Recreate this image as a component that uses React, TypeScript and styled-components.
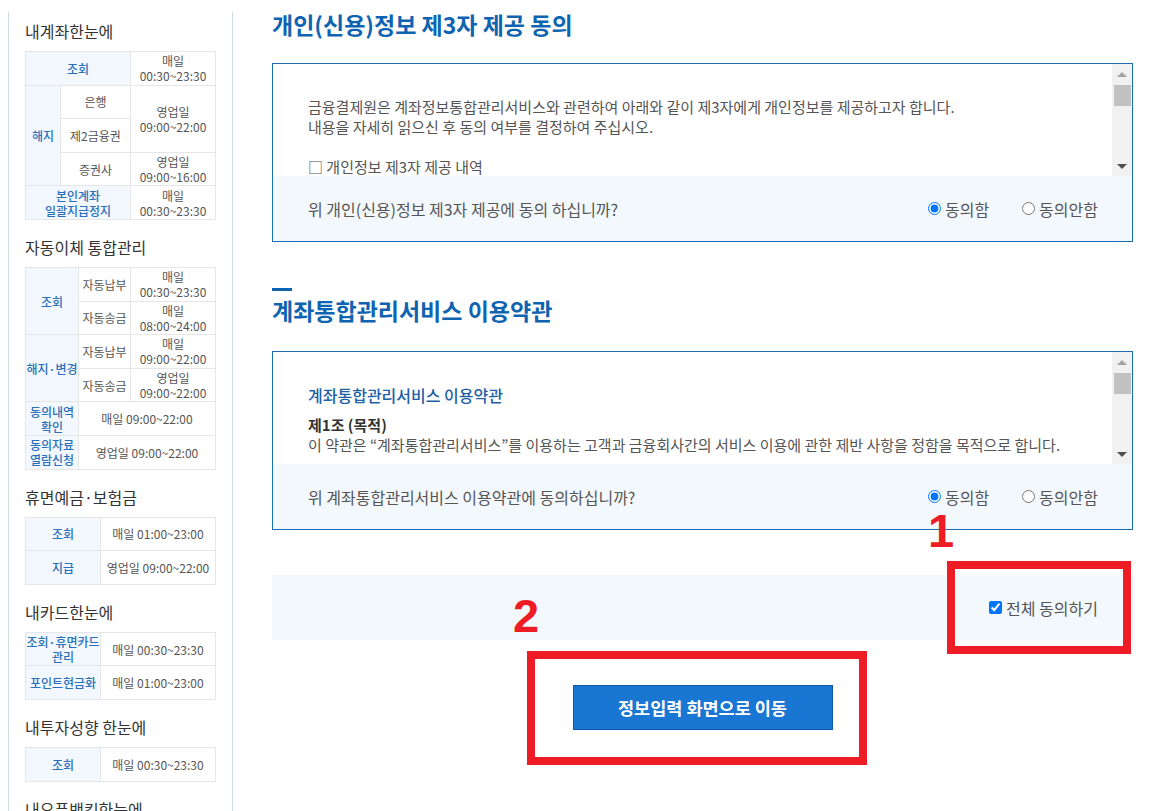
import React from "react";
import styled, { createGlobalStyle } from "styled-components";

const GlobalStyle = createGlobalStyle`
    html, body {
        margin: 0;
        padding: 0;
        background: #fff;
    }

    body {
        font-family: "Noto Sans CJK KR", "Noto Sans", sans-serif;
        color: #555;
    }
`;

const Page = styled.div`
    display: flex;
    align-items: flex-start;
    width: 1151px;
`;

/* ---------- sidebar ---------- */

const Sidebar = styled.aside`
    flex: none;
    box-sizing: border-box;
    width: 225px;
    min-height: 900px;
    margin: 12px 0 0 8px;
    padding: 9px 17px 0 16px;
    border-left: 1px solid #cfdeed;
    border-right: 1px solid #cfdeed;
`;

const SideGroup = styled.section`
    & + & {
        margin-top: 17px;
    }
`;

const SideTitle = styled.h3`
    margin: 0 0 10px;
    font-size: 16px;
    font-weight: 400;
    line-height: 20px;
    color: #333;
`;

const TimeTable = styled.table`
    width: 190px;
    border-collapse: collapse;
    table-layout: fixed;
    font-size: 12px;
    line-height: 15px;
    color: #555;

    & td,
    & th {
        height: 32.6px;
        padding: 0;
        border: 1px solid #e6e6e6;
        text-align: center;
        vertical-align: middle;
    }

    & th {
        background: #f2f8fe;
        color: #2a6fba;
        font-weight: 500;
    }
`;

const Col = styled.col<{ $w: number }>`
    width: ${(p) => p.$w}px;
`;

/* ---------- main ---------- */

const Main = styled.main`
    position: relative;
    flex: none;
    width: 861px;
    margin-left: 39px;
    padding-top: 9px;
`;

const Section = styled.section`
    & + & {
        margin-top: 46px;
    }
`;

const SectionTitle = styled.h2<{ $bar?: boolean }>`
    margin: 0 0 ${(p) => (p.$bar ? 26 : 24)}px;
    font-size: 23px;
    font-weight: 700;
    line-height: 30px;
    color: #0f64b1;

    &::before {
        content: "";
        display: ${(p) => (p.$bar ? "block" : "none")};
        width: 20px;
        height: 3px;
        margin-bottom: 4px;
        background: #0f64b1;
    }
`;

const ConsentBox = styled.div`
    border: 1px solid #1a6cb4;
`;

const ScrollArea = styled.div`
    display: flex;
    height: 112px;
    background: #fff;
`;

const ScrollText = styled.div`
    flex: 1;
    overflow: hidden;
    padding: 33px 35px 0;
    font-size: 15px;
    line-height: 20px;
    color: #555;

    & p {
        margin: 0 0 20px;
    }
`;

const TermsTitle = styled.p`
    && {
        margin: 0 0 10px;
    }
    font-size: 16px;
    font-weight: 500;
    color: #1e5fa6;
`;

const Article = styled.strong`
    display: block;
    font-weight: 700;
    color: #333;
`;

const Scrollbar = styled.div`
    flex: none;
    display: flex;
    flex-direction: column;
    align-items: center;
    width: 20px;
    background: #f1f1f1;
`;

const ArrowButton = styled.div<{ $dir: "up" | "down" }>`
    display: flex;
    align-items: center;
    justify-content: center;
    width: 100%;
    height: 20px;

    &::after {
        content: "";
        border-left: 5px solid transparent;
        border-right: 5px solid transparent;
        ${(p) =>
            p.$dir === "up"
                ? "border-bottom: 5px solid #a3a3a3;"
                : "border-top: 5px solid #505050;"}
    }
`;

const Thumb = styled.div`
    width: 17px;
    height: 21px;
    margin-top: 1px;
    background: #c1c1c1;
`;

const Track = styled.div`
    flex: 1;
`;

const BoxFooter = styled.div`
    display: flex;
    align-items: center;
    justify-content: space-between;
    height: 65px;
    padding: 0 34px 0 35px;
    background: #f3f8fd;
    font-size: 16px;
    color: #555;
`;

const RadioGroup = styled.div`
    display: flex;
    gap: 33px;
`;

const CheckLabel = styled.label`
    display: inline-flex;
    align-items: center;
    gap: 4px;
    font-size: 16px;
    color: #555;

    & input {
        width: 13px;
        height: 13px;
        margin: 0;
    }
`;

const AllAgreeBar = styled.div`
    display: flex;
    align-items: center;
    justify-content: flex-end;
    height: 65px;
    margin-top: 45px;
    padding: 0 35px;
    background: #f3f8fd;
`;

const ButtonRow = styled.div`
    display: flex;
    justify-content: center;
    margin-top: 45px;
`;

const NextButton = styled.button`
    width: 260px;
    height: 45px;
    border: 1px solid #0f5ba6;
    background: #1976d2;
    color: #fff;
    font-family: "Noto Sans CJK KR", "Noto Sans", sans-serif;
    font-size: 17.5px;
    font-weight: 700;
    cursor: pointer;
`;

/* ---------- annotations laid over the page ---------- */

const MarkBox = styled.div<{ $x: number; $y: number; $w: number; $h: number }>`
    position: absolute;
    left: ${(p) => p.$x}px;
    top: ${(p) => p.$y}px;
    width: ${(p) => p.$w}px;
    height: ${(p) => p.$h}px;
    box-sizing: border-box;
    border: 8px solid #ee1c25;
    pointer-events: none;
`;

const MarkNum = styled.span<{ $x: number; $y: number }>`
    position: absolute;
    left: ${(p) => p.$x}px;
    top: ${(p) => p.$y}px;
    font-family: "Liberation Sans", Arial, sans-serif;
    font-size: 47px;
    font-weight: 700;
    line-height: 1;
    color: #ee1c25;
    pointer-events: none;
`;

const FakeScroll = () => (
    <Scrollbar>
        <ArrowButton $dir="up" />
        <Thumb />
        <Track />
        <ArrowButton $dir="down" />
    </Scrollbar>
);

const App = () => {
    return (
        <Page>
            <GlobalStyle />
            <Sidebar>
                <SideGroup>
                    <SideTitle>내계좌한눈에</SideTitle>
                    <TimeTable>
                        <colgroup>
                            <Col $w={35} />
                            <Col $w={70} />
                            <Col $w={85} />
                        </colgroup>
                        <tbody>
                            <tr>
                                <th colSpan={2}>조회</th>
                                <td>매일<br />00:30~23:30</td>
                            </tr>
                            <tr>
                                <th rowSpan={3}>해지</th>
                                <td>은행</td>
                                <td rowSpan={2}>영업일<br />09:00~22:00</td>
                            </tr>
                            <tr>
                                <td>제2금융권</td>
                            </tr>
                            <tr>
                                <td>증권사</td>
                                <td>영업일<br />09:00~16:00</td>
                            </tr>
                            <tr>
                                <th colSpan={2}>본인계좌<br />일괄지급정지</th>
                                <td>매일<br />00:30~23:30</td>
                            </tr>
                        </tbody>
                    </TimeTable>
                </SideGroup>

                <SideGroup>
                    <SideTitle>자동이체 통합관리</SideTitle>
                    <TimeTable>
                        <colgroup>
                            <Col $w={53} />
                            <Col $w={52} />
                            <Col $w={85} />
                        </colgroup>
                        <tbody>
                            <tr>
                                <th rowSpan={2}>조회</th>
                                <td>자동납부</td>
                                <td>매일<br />00:30~23:30</td>
                            </tr>
                            <tr>
                                <td>자동송금</td>
                                <td>매일<br />08:00~24:00</td>
                            </tr>
                            <tr>
                                <th rowSpan={2}>해지·변경</th>
                                <td>자동납부</td>
                                <td>매일<br />09:00~22:00</td>
                            </tr>
                            <tr>
                                <td>자동송금</td>
                                <td>영업일<br />09:00~22:00</td>
                            </tr>
                            <tr>
                                <th>동의내역<br />확인</th>
                                <td colSpan={2}>매일 09:00~22:00</td>
                            </tr>
                            <tr>
                                <th>동의자료<br />열람신청</th>
                                <td colSpan={2}>영업일 09:00~22:00</td>
                            </tr>
                        </tbody>
                    </TimeTable>
                </SideGroup>

                <SideGroup>
                    <SideTitle>휴면예금·보험금</SideTitle>
                    <TimeTable>
                        <colgroup>
                            <Col $w={75} />
                            <Col $w={115} />
                        </colgroup>
                        <tbody>
                            <tr>
                                <th>조회</th>
                                <td>매일 01:00~23:00</td>
                            </tr>
                            <tr>
                                <th>지급</th>
                                <td>영업일 09:00~22:00</td>
                            </tr>
                        </tbody>
                    </TimeTable>
                </SideGroup>

                <SideGroup>
                    <SideTitle>내카드한눈에</SideTitle>
                    <TimeTable>
                        <colgroup>
                            <Col $w={75} />
                            <Col $w={115} />
                        </colgroup>
                        <tbody>
                            <tr>
                                <th>조회·휴면카드<br />관리</th>
                                <td>매일 00:30~23:30</td>
                            </tr>
                            <tr>
                                <th>포인트현금화</th>
                                <td>매일 01:00~23:00</td>
                            </tr>
                        </tbody>
                    </TimeTable>
                </SideGroup>

                <SideGroup>
                    <SideTitle>내투자성향 한눈에</SideTitle>
                    <TimeTable>
                        <colgroup>
                            <Col $w={75} />
                            <Col $w={115} />
                        </colgroup>
                        <tbody>
                            <tr>
                                <th>조회</th>
                                <td>매일 00:30~23:30</td>
                            </tr>
                        </tbody>
                    </TimeTable>
                </SideGroup>

                <SideGroup>
                    <SideTitle>내오픈뱅킹한눈에</SideTitle>
                </SideGroup>
            </Sidebar>

            <Main>
                <Section>
                    <SectionTitle>개인(신용)정보 제3자 제공 동의</SectionTitle>
                    <ConsentBox>
                        <ScrollArea>
                            <ScrollText>
                                <p>
                                    금융결제원은 계좌정보통합관리서비스와 관련하여 아래와 같이 제3자에게 개인정보를 제공하고자 합니다.
                                    <br />
                                    내용을 자세히 읽으신 후 동의 여부를 결정하여 주십시오.
                                </p>
                                <p>□ 개인정보 제3자 제공 내역</p>
                            </ScrollText>
                            <FakeScroll />
                        </ScrollArea>
                        <BoxFooter>
                            <span>위 개인(신용)정보 제3자 제공에 동의 하십니까?</span>
                            <RadioGroup>
                                <CheckLabel>
                                    <input type="radio" name="agree1" defaultChecked />
                                    동의함
                                </CheckLabel>
                                <CheckLabel>
                                    <input type="radio" name="agree1" />
                                    동의안함
                                </CheckLabel>
                            </RadioGroup>
                        </BoxFooter>
                    </ConsentBox>
                </Section>

                <Section>
                    <SectionTitle $bar>계좌통합관리서비스 이용약관</SectionTitle>
                    <ConsentBox>
                        <ScrollArea>
                            <ScrollText>
                                <TermsTitle>계좌통합관리서비스 이용약관</TermsTitle>
                                <p>
                                    <Article>제1조 (목적)</Article>
                                    이 약관은 “계좌통합관리서비스”를 이용하는 고객과 금융회사간의 서비스 이용에 관한 제반 사항을 정함을 목적으로 합니다.
                                </p>
                            </ScrollText>
                            <FakeScroll />
                        </ScrollArea>
                        <BoxFooter>
                            <span>위 계좌통합관리서비스 이용약관에 동의하십니까?</span>
                            <RadioGroup>
                                <CheckLabel>
                                    <input type="radio" name="agree2" defaultChecked />
                                    동의함
                                </CheckLabel>
                                <CheckLabel>
                                    <input type="radio" name="agree2" />
                                    동의안함
                                </CheckLabel>
                            </RadioGroup>
                        </BoxFooter>
                    </ConsentBox>
                </Section>

                <AllAgreeBar>
                    <CheckLabel>
                        <input type="checkbox" defaultChecked />
                        전체 동의하기
                    </CheckLabel>
                </AllAgreeBar>

                <ButtonRow>
                    <NextButton type="button">정보입력 화면으로 이동</NextButton>
                </ButtonRow>

                <MarkNum $x={656} $y={507}>1</MarkNum>
                <MarkBox $x={675} $y={561} $w={184} $h={93} />
                <MarkNum $x={241} $y={592}>2</MarkNum>
                <MarkBox $x={255} $y={651} $w={340} $h={114} />
            </Main>
        </Page>
    );
};

export default App;
